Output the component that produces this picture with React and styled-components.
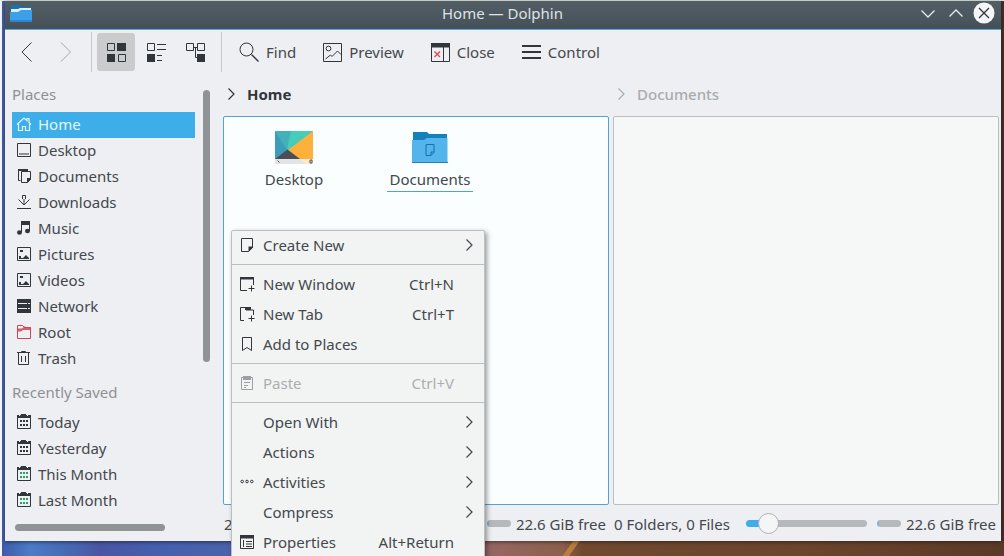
import React from "react";
import styled, { createGlobalStyle, css } from "styled-components";

const ink = "#31363b";
const text = "#43484d";
const muted = "#8e9194";
const accent = "#3daee9";
const line = "#bcbfc1";

const Global = createGlobalStyle`
  * { box-sizing: border-box; }
  body { margin: 0; }
  body, button, input {
    font-family: "Noto Sans", sans-serif;
    font-size: 15px;
    line-height: 20px;
    color: ${text};
  }
  button {
    margin: 0;
    padding: 0;
    border: 0;
    background: none;
  }
  ul { list-style: none; margin: 0; padding: 0; }
`;

const Desktop = styled.div`
  position: relative;
  display: flex;
  height: 100vh;
  overflow: hidden;
  padding: 1px 3px 15px 5px;
  background:
    linear-gradient(#e4ebe8, #e4ebe8) top / 100% 1px no-repeat,
    linear-gradient(90deg, #f4f6fa, #f4f6fa) left / 2px 100% no-repeat,
    linear-gradient(125deg, transparent 38%, #b97e38 42%, #b97e38 58%, transparent 62%) 57% 100% / 22px 15px no-repeat,
    linear-gradient(90deg, #3c5aa8 0%, #4c7cc8 3%, #4668b4 7%, #4a55a5 10%, #4560b0 16%, #4a63ab 23%, #7a5f80 36%, #96665f 50%, #8d5f4d 56%, #70492f 58%, #6b452c 80%, #5c3a28 100%) bottom / 100% 15px no-repeat,
    linear-gradient(90deg, #4560ae 50%, #46302a 50%);
`;

const Window = styled.main`
  flex: 1;
  min-width: 0;
  display: flex;
  flex-direction: column;
  background: #eeeff2;
  box-shadow: 0 1px 4px rgba(20, 15, 20, 0.6);
`;

const TitleBar = styled.header`
  display: grid;
  grid-template-columns: 1fr auto 1fr;
  align-items: center;
  height: 29px;
  padding: 0 6px 0 5px;
  background: linear-gradient(#525d64, #4b565e 60%, #464f58);
  border-bottom: 1px solid #5aa9d2;
  color: #dfe3e5;
`;

const Title = styled.h1`
  margin: 0;
  padding-bottom: 5px;
  font-size: 15px;
  font-weight: 400;
`;

const WindowButtons = styled.div`
  display: flex;
  justify-content: flex-end;
  gap: 6px;
  padding-bottom: 5px;
`;

const WindowButton = styled.button`
  display: flex;
  width: 22px;
  height: 22px;
`;

const Toolbar = styled.div`
  display: flex;
  align-items: center;
  gap: 2px;
  height: 46px;
  padding: 0 2px 2px;
`;

const ToolGroup = styled.div`
  display: flex;
  gap: 3px;
`;

const ToolButton = styled.button`
  display: flex;
  align-items: center;
  justify-content: center;
  gap: 6px;
  height: 38px;
  min-width: 38px;
  padding: 0 ${(p) => (p.$labelled ? "11px" : "8px")};
  border-radius: 3px;
  background: ${(p) => (p.$pressed ? "#cacbcd" : "none")};
`;

const ToolDivider = styled.span`
  width: 1px;
  height: 40px;
  margin: 0 3px 0 4px;
  background: #c6c8ca;
`;

const Body = styled.div`
  flex: 1;
  min-height: 0;
  display: flex;
`;

const Sidebar = styled.nav`
  width: 218px;
  flex: none;
  display: flex;
  flex-direction: column;
  padding: 8px 13px 10px 7px;
`;

const PlacesArea = styled.div`
  flex: 1;
  min-height: 0;
  display: flex;
  gap: 8px;
`;

const PlacesList = styled.div`
  flex: 1;
  min-width: 0;
`;

const Heading = styled.h2`
  margin: 0;
  padding: ${(p) => (p.$spaced ? "10px 0 8px" : "0 0 8px")};
  font-size: 15px;
  font-weight: 400;
  color: ${muted};
`;

const Place = styled.a`
  display: flex;
  align-items: center;
  gap: 6px;
  height: 26px;
  padding: 0 4px 2px;
  color: ${(p) => (p.$active ? "#e6f6fe" : text)};
  background: ${(p) => (p.$active ? accent : "none")};
  text-decoration: none;
`;

const ScrollHandle = styled.div`
  border-radius: 4px;
  background: #8f9395;
  ${(p) =>
    p.$horizontal
      ? css`
          height: 7px;
          width: 150px;
          margin-left: 3px;
        `
      : css`
          width: 7px;
          height: 272px;
          margin-top: 6px;
        `}
`;

const Panes = styled.div`
  flex: 1;
  min-width: 0;
  display: flex;
  gap: 4px;
  padding-right: 2px;
`;

const Pane = styled.section`
  flex: 1 1 0;
  min-width: 0;
  display: flex;
  flex-direction: column;
`;

const Crumb = styled.div`
  display: flex;
  align-items: center;
  gap: 8px;
  height: 40px;
  padding-bottom: 4px;
  font-weight: ${(p) => (p.$active ? 700 : 500)};
  color: ${(p) => (p.$active ? ink : "#a9acae")};
`;

const Files = styled.ul`
  flex: 1;
  display: flex;
  align-items: flex-start;
  padding: 10px 2px;
  border: 1px solid ${(p) => (p.$active ? "#4fa5d0" : line)};
  border-radius: 2px;
  background: ${(p) => (p.$active ? "#fafefe" : "#f6f8f7")};
`;

const File = styled.li`
  width: 136px;
  display: flex;
  flex-direction: column;
  align-items: center;
`;

const FileName = styled.span`
  padding: 0 3px 2px;
  border-bottom: 1px solid ${(p) => (p.$marked ? "#4fa5d0" : "transparent")};
`;

const StatusBar = styled.footer`
  display: flex;
  align-items: center;
  height: 36px;
  padding: 1px 3px 0 1px;
  white-space: nowrap;
`;

const Zoom = styled.input`
  appearance: none;
  width: 121px;
  height: 22px;
  margin: 0 10px 0 auto;
  background: none;
  &::-webkit-slider-runnable-track {
    height: 7px;
    border-radius: 4px;
    background: linear-gradient(90deg, ${accent} 18%, #b6b9bc 18%);
  }
  &::-webkit-slider-thumb {
    appearance: none;
    width: 21px;
    height: 21px;
    margin-top: -7px;
    border: 1px solid #aeb1b3;
    border-radius: 50%;
    background: #f4f5f6;
  }
`;

const Capacity = styled.div`
  width: 24px;
  height: 7px;
  margin-right: 5px;
  border-radius: 4px;
  background: linear-gradient(90deg, #7fb2d2 2px, #b6b9bc 2px);
`;

const Menu = styled.div`
  position: absolute;
  left: 231px;
  top: 230px;
  width: 254px;
  display: flex;
  flex-direction: column;
  border: 1px solid ${line};
  border-radius: 2px;
  background: #f2f4f4;
  box-shadow: 2px 2px 5px rgba(0, 0, 0, 0.4);
`;

const MenuItem = styled.button`
  display: grid;
  grid-template-columns: 18px 1fr auto 17px;
  column-gap: 6px;
  align-items: center;
  height: 30px;
  padding: 0 7px 2px;
  text-align: left;
  color: ${(p) => (p.disabled ? "#abaeb0" : text)};
`;

const Shortcut = styled.span`
  grid-column: 3;
`;

const Arrow = styled.span`
  grid-column: 4;
  display: flex;
  justify-content: flex-end;
`;

const MenuDivider = styled.hr`
  width: 100%;
  height: 1px;
  margin: 3px 0 5px;
  border: 0;
  background: ${line};
`;

const calendar = (dot) => (
  <>
    <path d="M1.500 1.500h13v13h-13z" />
    <path d="M1 1h14v3H1zM5 0h5v2H5z" fill={ink} stroke="none" />
    <path d="M3 1h1v1H3zM11 1h1v1h-1z" fill="#eeeff2" stroke="none" />
    <path
      d="M4 6h2v2H4zm3 0h2v2H7zm3 0h2v2h-2zM4 10h2v2H4zm3 0h2v2H7zm3 0h2v2h-2z"
      fill={dot}
      stroke="none"
    />
  </>
);

const picture = (
  <>
    <path d="M1.500 1.500h13v13h-13z" />
    <path d="M4 4h3v2H4zM3 12v-2h2v2h2l3-3 3 3v1H3z" fill={ink} stroke="none" />
  </>
);

/* Line drawings; 22-unit ones are for the toolbar, 16-unit ones for lists and menus. */
const drawings = {
  back: [22, <path d="M16.500 1.500L7 11l9.500 9.500" />],
  forward: [22, <path d="M6 1.500L15.500 11 6 20.500" stroke="#a3a6a8" />],
  icons: [
    22,
    <>
      <path d="M2.500 2.500h7v7h-7zM13.500 13.500h7v7h-7z" />
      <path d="M12 2h9v8h-9zM2 13h8v8H2z" fill={ink} stroke="none" />
    </>,
  ],
  details: [
    22,
    <>
      <path d="M2.500 2.500h7v7h-7zM12 3.500h9M12 8.500h9M12 14.500h5M12 19.500h5" />
      <path d="M2 13h8v8H2z" fill={ink} stroke="none" />
    </>,
  ],
  tree: [
    22,
    <>
      <path d="M1.500 2.500h7v7h-7zM12.500 2.500h7v7h-7zM9 6.500h4M10.500 6.500v10h3" />
      <path d="M12 13h8v8h-8z" fill={ink} stroke="none" />
    </>,
  ],
  find: [
    22,
    <>
      <circle cx="8.500" cy="8.500" r="6.500" />
      <path d="M13.500 13.500l7 7" strokeWidth="1.300" />
    </>,
  ],
  preview: [
    22,
    <>
      <path d="M2.500 2.500h18v18h-18z" />
      <circle cx="7.500" cy="7.500" r="2.400" />
      <path d="M4.500 18l5-4 1.500 1.500 5.500-5.500 3.500 3.500" />
    </>,
  ],
  close: [
    22,
    <>
      <path d="M2.500 2.500h18v18h-18zM14.500 6v14" />
      <path d="M2 2h19v4.500H2z" fill={ink} stroke="none" />
      <path d="M5.500 10.500l5.500 5.500M11 10.500L5.500 16" stroke="#da4453" strokeWidth="1.200" />
    </>,
  ],
  control: [22, <path d="M2 5h19M2 11h19M2 17h19" strokeWidth="2" />],
  minimise: [22, <path d="M4.500 8.500L11 15l6.500-6.500" stroke="#e6eaec" strokeWidth="1.300" />],
  maximise: [22, <path d="M4.500 14.500L11 8l6.500 6.500" stroke="#e6eaec" strokeWidth="1.300" />],
  quit: [
    22,
    <>
      <circle cx="11" cy="11" r="10.500" fill="#f4f5f6" stroke="none" />
      <path d="M6 6l10 10M16 6L6 16" strokeWidth="1.300" />
    </>,
  ],
  home: [
    16,
    <path
      d="M1 8.500L8 2l3 2.700V2.500h2v4l2 2M2.500 8v6.500h4v-4h3v4h4V8"
      stroke="#e6f6fe"
      strokeWidth="1.200"
    />,
  ],
  desktop: [16, <path d="M1.500 1.500h13v13h-13zM3 12h10" />],
  documents: [
    16,
    <>
      <path d="M4.500 12.500h-2v-11h9M5.500 3.500h9v8l-3 3h-6z" />
      <path d="M2 1h10v2H2zM15 10v1l-4 4v-5z" fill={ink} stroke="none" />
    </>,
  ],
  downloads: [16, <path d="M1 14.500h14M6.500 5v-3.500h3V5M2.500 5.500L8 11l5.500-5.500M8 5v5" />],
  music: [
    16,
    <>
      <path d="M5.500 12V1.500h8V11" />
      <path
        d="M5 1h9v4H5zM1 12.500a2.300 2 0 015 0 2.300 2 0 01-5 0zM9 11a2.300 2 0 015 0 2.300 2 0 01-5 0z"
        fill={ink}
        stroke="none"
      />
    </>,
  ],
  picture: [16, picture],
  network: [
    16,
    <>
      <path d="M1 1h14v14H1z" fill={ink} stroke="none" />
      <path d="M2 5.500h9M12 5.500h2M2 10.500h9M12 10.500h2" stroke="#eeeff2" />
    </>,
  ],
  root: [
    16,
    <>
      <path d="M1.500 14.500v-13h5l2 2h6v11z" stroke="#cf4555" />
      <path
        d="M2 4.500h4l3-2.500 1 1.500h5v2.500H7l-2 1.500H2z"
        fill="#cf4555"
        stroke="none"
        opacity="0.85"
      />
    </>,
  ],
  trash: [16, <path d="M1 2.500h13M5.500 2V1.500h4V2M2.500 3v11.500h10V3M5.500 6v6M9.500 6v6" />],
  calendar: [16, calendar(ink)],
  calendarGreen: [16, calendar("#2d9c68")],
  create: [
    16,
    <>
      <path d="M2.500 1.500h11v9l-4 4h-7z" />
      <path d="M14 9.500v1L9.500 15V9.500z" fill={ink} stroke="none" />
    </>,
  ],
  newWindow: [
    16,
    <>
      <path d="M8 14.500H1.500v-13h13V9M12.500 9.500v6M9.500 12.500h6" />
      <path d="M1 1h14v2.500H1z" fill={ink} stroke="none" />
    </>,
  ],
  newTab: [
    16,
    <>
      <path d="M5 14.500H1.500v-13H7v2.500h7.500V9M12.500 9.500v6M9.500 12.500h6" />
      <path d="M6 1h6v3H6z" fill={ink} stroke="none" />
    </>,
  ],
  bookmark: [16, <path d="M3.500 1.500h9v13L8 11.500l-4.500 3z" />],
  paste: [
    16,
    <>
      <path d="M2.500 2.500h11v12h-11zM5 7.500h6M5 10.500h4M5 12.500h2" stroke="#9da0a2" />
      <path d="M4 1h8v4H4z" fill="#9da0a2" stroke="none" />
    </>,
  ],
  activities: [
    16,
    <>
      <circle cx="3.200" cy="7.500" r="1.300" />
      <circle cx="8" cy="7.500" r="1.300" />
      <circle cx="12.800" cy="7.500" r="1.300" />
    </>,
  ],
  properties: [
    16,
    <>
      <path d="M1.500 1.500h13v13h-13zM4.500 6v7M7 7.500h6M7 10h6M7 12.500h6" />
      <path d="M1 1h14v3.500H1z" fill={ink} stroke="none" />
    </>,
  ],
  chevron: [16, <path d="M5.500 2.500L11 8l-5.500 5.500" strokeWidth="1.200" stroke="currentColor" />],
};

function Icon({ name }) {
  const [size, shape] = drawings[name];
  return (
    <svg
      width={size}
      height={size}
      viewBox={`0 0 ${size} ${size}`}
      fill="none"
      stroke={ink}
      aria-hidden="true"
    >
      {shape}
    </svg>
  );
}

const AppIcon = () => (
  <svg width="22" height="20" viewBox="0 0 22 20" aria-hidden="true">
    <path d="M1 0h8l2 2h10v6H1z" fill="#1374b8" />
    <path d="M1 4h7l2-1h11v6H1z" fill="#d9f1ff" />
    <path d="M0 7h8l3-2h11v12H0z" fill="#3c9fe8" />
    <path d="M0 15h22v2H0z" fill="#2b84d4" />
  </svg>
);

const DesktopThumb = () => (
  <svg width="38" height="42" viewBox="0 0 38 42" aria-hidden="true">
    <path d="M0 4h38v29H0z" fill="#fdb13c" />
    <path d="M0 4h38L0 33z" fill="#45cdb9" />
    <path d="M0 4l13 19L0 33z" fill="#3d9cba" />
    <path d="M0 4h16l-4 19z" fill="#43b2b8" />
    <path d="M0 32l12.500-9.500L25 32z" fill="#4a4f57" />
    <path d="M0 32h38v5H0z" fill="#e3e4e5" />
    <path d="M25 32h13v5h-7z" fill="#fbe9cd" />
    <path d="M2.500 33.500l2 2M35 33h2v3h-2z" stroke="#555" fill="none" />
  </svg>
);

const FolderThumb = () => (
  <svg width="36" height="42" viewBox="0 0 36 42" aria-hidden="true">
    <path d="M1 5h14l2 2h18v12H1z" fill="#1680bd" />
    <path d="M0 13h12l3-2h20.500v25H0z" fill="#54b4ec" />
    <path d="M0 35h36v1H0z" fill="#2a7fb5" />
    <path d="M14 17.500h8v8l-3 3h-5zM22 25h-3v3.500" fill="none" stroke="#1b6fa5" />
  </svg>
);

const places = [
  ["Home", "home"],
  ["Desktop", "desktop"],
  ["Documents", "documents"],
  ["Downloads", "downloads"],
  ["Music", "music"],
  ["Pictures", "picture"],
  ["Videos", "picture"],
  ["Network", "network"],
  ["Root", "root"],
  ["Trash", "trash"],
];

const recent = [
  ["Today", "calendar"],
  ["Yesterday", "calendar"],
  ["This Month", "calendarGreen"],
  ["Last Month", "calendarGreen"],
];

const menuGroups = [
  [{ label: "Create New", icon: "create", sub: true }],
  [
    { label: "New Window", icon: "newWindow", keys: "Ctrl+N" },
    { label: "New Tab", icon: "newTab", keys: "Ctrl+T" },
    { label: "Add to Places", icon: "bookmark" },
  ],
  [{ label: "Paste", icon: "paste", keys: "Ctrl+V", disabled: true }],
  [
    { label: "Open With", sub: true },
    { label: "Actions", sub: true },
    { label: "Activities", icon: "activities", sub: true },
    { label: "Compress", sub: true },
    { label: "Properties", icon: "properties", keys: "Alt+Return" },
  ],
];

function PlaceLinks({ items, active }) {
  return (
    <ul>
      {items.map(([label, icon]) => (
        <li key={label}>
          <Place href={`#${label}`} $active={label === active}>
            <Icon name={icon} />
            {label}
          </Place>
        </li>
      ))}
    </ul>
  );
}

function FolderPane({ name, summary, active, children }) {
  return (
    <Pane aria-label={name}>
      <Crumb $active={active}>
        <Icon name="chevron" />
        {name}
      </Crumb>
      <Files $active={active}>{children}</Files>
      <StatusBar>
        <span>{summary}</span>
        <Zoom type="range" min="0" max="100" defaultValue="12" aria-label={`${name} icon size`} />
        <Capacity />
        <span>22.6 GiB free</span>
      </StatusBar>
    </Pane>
  );
}

export default function App() {
  return (
    <Desktop>
      <Global />
      <Window>
        <TitleBar>
          <AppIcon />
          <Title>Home — Dolphin</Title>
          <WindowButtons>
            <WindowButton aria-label="Minimise"><Icon name="minimise" /></WindowButton>
            <WindowButton aria-label="Maximise"><Icon name="maximise" /></WindowButton>
            <WindowButton aria-label="Close window"><Icon name="quit" /></WindowButton>
          </WindowButtons>
        </TitleBar>
        <Toolbar>
          <ToolButton aria-label="Back"><Icon name="back" /></ToolButton>
          <ToolButton aria-label="Forward"><Icon name="forward" /></ToolButton>
          <ToolDivider />
          <ToolButton aria-label="Icons" $pressed><Icon name="icons" /></ToolButton>
          <ToolButton aria-label="Details"><Icon name="details" /></ToolButton>
          <ToolButton aria-label="Tree"><Icon name="tree" /></ToolButton>
          <ToolDivider />
          <ToolGroup>
            <ToolButton $labelled><Icon name="find" />Find</ToolButton>
            <ToolButton $labelled><Icon name="preview" />Preview</ToolButton>
            <ToolButton $labelled><Icon name="close" />Close</ToolButton>
            <ToolButton $labelled><Icon name="control" />Control</ToolButton>
          </ToolGroup>
        </Toolbar>
        <Body>
          <Sidebar>
            <PlacesArea>
              <PlacesList>
                <Heading>Places</Heading>
                <PlaceLinks items={places} active="Home" />
                <Heading $spaced>Recently Saved</Heading>
                <PlaceLinks items={recent} />
              </PlacesList>
              <ScrollHandle />
            </PlacesArea>
            <ScrollHandle $horizontal />
          </Sidebar>
          <Panes>
            <FolderPane name="Home" summary="2" active>
              <File>
                <DesktopThumb />
                <FileName>Desktop</FileName>
              </File>
              <File>
                <FolderThumb />
                <FileName $marked>Documents</FileName>
              </File>
            </FolderPane>
            <FolderPane name="Documents" summary="0 Folders, 0 Files" />
          </Panes>
        </Body>
      </Window>
      <Menu role="menu">
        {menuGroups.map((group, i) => (
          <React.Fragment key={i}>
            {i > 0 && <MenuDivider />}
            {group.map(({ label, icon, keys, sub, disabled }) => (
              <MenuItem key={label} role="menuitem" disabled={disabled}>
                {icon ? <Icon name={icon} /> : <span />}
                <span>{label}</span>
                {keys && <Shortcut>{keys}</Shortcut>}
                {sub && <Arrow><Icon name="chevron" /></Arrow>}
              </MenuItem>
            ))}
          </React.Fragment>
        ))}
      </Menu>
    </Desktop>
  );
}
